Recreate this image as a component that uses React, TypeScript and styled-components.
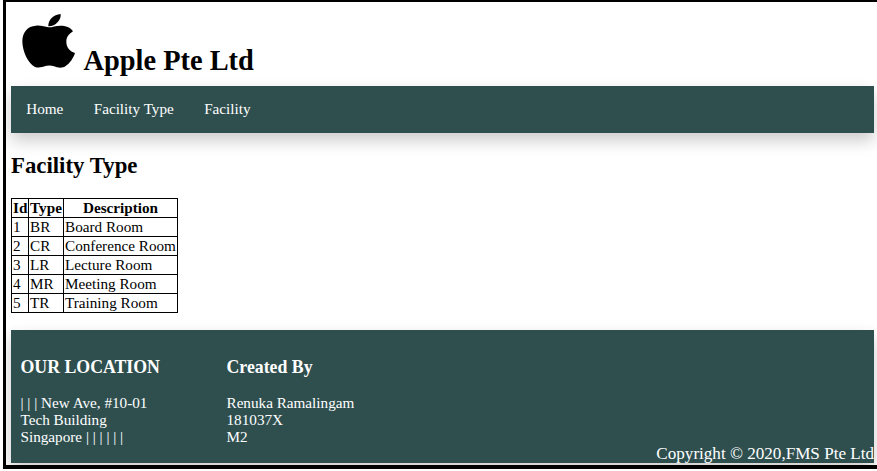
import React from "react";
import styled, { createGlobalStyle } from "styled-components";

const GlobalStyle = createGlobalStyle`
  * { box-sizing: border-box; }
  body {
    margin: 0;
    background: #fff;
    color: #000;
    font-family: "Liberation Serif", "Times New Roman", serif;
    font-size: 15.2px;
    overflow: hidden;
  }
`;

const Frame = styled.div`
  height: 469px;
  margin-left: 3px;
  padding: 0 2.6px 0 5px;
  border: solid #000;
  border-width: 2px 0 4px 3px;
  overflow: hidden;
  display: flex;
  flex-direction: column;
`;

const Header = styled.header`
  height: 84px;
  flex: none;
  display: flex;
  align-items: flex-start;
  padding: 12px 0 0 11px;
`;

const Logo = styled.svg`
  width: 53px;
  height: 54px;
  display: block;
`;

const Company = styled.h1`
  margin: 30px 0 0 8.5px;
  font-size: 28.4px;
  line-height: 34px;
`;

const raised = "0 7.6px 15.2px rgba(0,0,0,.17), 0 5.7px 19px rgba(0,0,0,.04)";

const Nav = styled.nav`
  height: 47px;
  flex: none;
  display: flex;
  align-items: center;
  gap: 30.4px;
  padding: 0 15.2px 1px;
  background: #2f4f4f;
  box-shadow: ${raised};
`;

const NavLink = styled.a`
  color: #fff;
  text-decoration: none;
  line-height: 18px;
`;

const Main = styled.main`
  height: 196.5px;
  flex: none;
`;

const Title = styled.h2`
  margin: 20px 0 19px;
  font-size: 22.8px;
  line-height: 26px;
`;

const Table = styled.table`
  width: 167px;
  table-layout: fixed;
  border-collapse: collapse;
  line-height: 18px;

  th, td {
    height: 19px;
    padding: 0 1px;
    border: 1px solid #000;
    white-space: nowrap;
  }
`;

const Column = styled.col<{ $width: number }>`
  width: ${(p) => p.$width}px;
`;

const Footer = styled.footer`
  height: 133px;
  flex: none;
  display: flex;
  padding-left: 9.5px;
  color: #fff;
  background: #2f4f4f;
  box-shadow: ${raised};
`;

const FooterColumn = styled.section<{ $width: number }>`
  width: ${(p) => p.$width}px;
  flex: none;
  padding-top: 27px;
`;

const FooterTitle = styled.h3`
  margin: 0 0 16px;
  font-size: 17.8px;
  line-height: 21px;
`;

const Lines = styled.p`
  margin: 0;
  line-height: 17px;
`;

const Copyright = styled.div`
  margin-left: auto;
  align-self: flex-end;
  padding-right: 0.4px;
  font-size: 17.1px;
  line-height: 19px;
  white-space: nowrap;
`;

const facilities = [
  ["BR", "Board Room"],
  ["CR", "Conference Room"],
  ["LR", "Lecture Room"],
  ["MR", "Meeting Room"],
  ["TR", "Training Room"],
];

export default function App() {
  return (
    <>
      <GlobalStyle />
      <Frame>
        <Header>
          <Logo viewBox="18 18 159 162" aria-label="Apple">
            <path d="M97 58C88 57 76 52 60 53C34 54 19 74 19 100C19 132 38 168 56 176C66 181 78 178 86 175C94 172 106 172 114 175C124 179 138 182 148 175C162 166 172 150 177 135C162 130 151 118 151 101C151 86 160 77 171 70C164 58 148 53 134 53C118 53 106 59 97 58Z" />
            <path d="M97 55C96 36 112 20 134 18C136 36 118 56 97 55Z" />
          </Logo>
          <Company>Apple Pte Ltd</Company>
        </Header>
        <Nav>
          <NavLink>Home</NavLink>
          <NavLink>Facility Type</NavLink>
          <NavLink>Facility</NavLink>
        </Nav>
        <Main>
          <Title>Facility Type</Title>
          <Table>
            <colgroup>
              <Column $width={17} />
              <Column $width={35} />
              <Column $width={114} />
            </colgroup>
            <thead>
              <tr>
                <th>Id</th>
                <th>Type</th>
                <th>Description</th>
              </tr>
            </thead>
            <tbody>
              {facilities.map(([type, description], i) => (
                <tr key={type}>
                  <td>{i + 1}</td>
                  <td>{type}</td>
                  <td>{description}</td>
                </tr>
              ))}
            </tbody>
          </Table>
        </Main>
        <Footer>
          <FooterColumn $width={206}>
            <FooterTitle>OUR LOCATION</FooterTitle>
            <Lines>
              | | | New Ave, #10-01
              <br />
              Tech Building
              <br />
              Singapore | | | | | |
            </Lines>
          </FooterColumn>
          <FooterColumn $width={206}>
            <FooterTitle>Created By</FooterTitle>
            <Lines>
              Renuka Ramalingam
              <br />
              181037X
              <br />
              M2
            </Lines>
          </FooterColumn>
          <Copyright>Copyright © 2020,FMS Pte Ltd</Copyright>
        </Footer>
      </Frame>
    </>
  );
}
